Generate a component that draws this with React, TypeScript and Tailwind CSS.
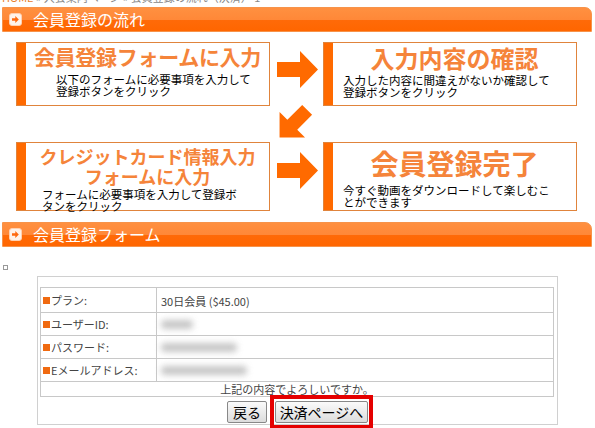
import React from "react";

const JP = "font-['Noto_Sans_CJK_JP','Noto_Sans',sans-serif]";

function BarIcon() {
  return (
    <svg width="13" height="13" viewBox="0 0 13 13" className="shrink-0">
      <rect x="0.5" y="0.5" width="12" height="12" rx="2.5" fill="#fff3ea" stroke="#ffd0b0" />
      <polygon points="3,5.2 6.3,5.2 6.3,3 9.8,6.5 6.3,10 6.3,7.8 3,7.8" fill="#ff6a10" />
    </svg>
  );
}

function SectionBar({ title }: { title: string }) {
  return (
    <div className="ml-[2px] w-[590px] h-[25px] rounded-tr-[7px] flex items-center gap-[11px] pl-[6px] border border-[#f7934a] bg-[linear-gradient(to_bottom,#ff9040_0%,#ff8838_50%,#ff6a08_52%,#ff6600_100%)]">
      <BarIcon />
      <span className={`${JP} text-white text-[16px] leading-none pb-[1px]`}>{title}</span>
    </div>
  );
}

function FlowBox({ children, sub, subPad }: { children: React.ReactNode; sub: React.ReactNode; subPad: string }) {
  return (
    <div className="flex border border-[#e0843c] bg-white h-full">
      <div className="w-[9px] bg-[#ff6a00] shrink-0" />
      <div className="flex-1 flex flex-col pt-[2px]">
        <div className={`${JP} text-[#f5843a] font-bold text-center leading-none`}>{children}</div>
        <div className={`${JP} text-black text-[11.5px] leading-[12px] ${subPad}`}>{sub}</div>
      </div>
    </div>
  );
}

function RightArrow() {
  return (
    <svg width="42" height="37" viewBox="0 0 42 37">
      <polygon points="0,11 23,11 23,0 41,18.5 23,37 23,26 0,26" fill="#ff6a00" />
    </svg>
  );
}

function DownLeftArrow() {
  return (
    <svg width="40" height="40" viewBox="0 0 40 40">
      <g transform="rotate(135 20 20)">
        <polygon points="0,13 21,13 21,2 39,20 21,38 21,27 0,27" fill="#ff6a00" />
      </g>
    </svg>
  );
}

function Row({ label, children }: { label: string; children: React.ReactNode }) {
  return (
    <tr className="h-[23px]">
      <td className="border border-[#c8c8c8] w-[116px] pl-[2px] align-middle">
        <div className="flex items-center gap-[1px]">
          <span className="inline-block w-[7px] h-[7px] bg-[#f06a10]" />
          <span className={`${JP} text-[11px] text-[#444]`}>{label}</span>
        </div>
      </td>
      <td className="border border-[#c8c8c8] pl-[4px] align-middle">{children}</td>
    </tr>
  );
}

function Blur({ w }: { w: number }) {
  return <div className="h-[9px] bg-[#b8b8b8] blur-[3px] rounded-sm opacity-80" style={{ width: w }} />;
}

export default function App() {
  return (
    <div className="w-[595px] h-[428px] bg-white overflow-hidden relative">
      <div className="h-[4px] overflow-hidden">
        <div className={`${JP} text-[11px] leading-[12px] -mt-[9px] pl-[2px] text-[#888] whitespace-nowrap`}>
          <span className="text-[#e8802e]">HOME</span> » 入会案内ページ » 会員登録の流れ（決済） 1
        </div>
      </div>
      <div className="mt-[3px]">
        <SectionBar title="会員登録の流れ" />
      </div>

      <div className="ml-[16px] mt-[10px] grid grid-cols-[254px_53px_254px] grid-rows-[64px_36px_69px]">
        <FlowBox
          sub={<>以下のフォームに必要事項を入力して<br />登録ボタンをクリック</>}
          subPad="pl-[30px] pt-[6px]"
        >
          <span className="text-[21px] tracking-[-0.3px] leading-[22px]">会員登録フォームに入力</span>
        </FlowBox>
        <div className="pl-[7px] pt-[9px]">
          <RightArrow />
        </div>
        <FlowBox
          sub={<>入力した内容に間違えがないか確認して<br />登録ボタンをクリック</>}
          subPad="pl-[10px] pt-[4px]"
        >
          <span className="text-[24px] leading-[25px]">入力内容の確認</span>
        </FlowBox>

        <div />
        <div className="pl-[3px] -mt-[2px]">
          <DownLeftArrow />
        </div>
        <div />

        <FlowBox
          sub={<>フォームに必要事項を入力して登録ボ<br />タンをクリック</>}
          subPad="pl-[16px] pt-[2px]"
        >
          <div className="text-[18px] leading-[20px] pt-[1px]">クレジットカード情報入力<br />フォームに入力</div>
        </FlowBox>
        <div className="pl-[7px] pt-[10px]">
          <RightArrow />
        </div>
        <FlowBox
          sub={<>今すぐ動画をダウンロードして楽しむこ<br />とができます</>}
          subPad="pl-[10px] pt-[3px]"
        >
          <span className="text-[28px] leading-[36px]">会員登録完了</span>
        </FlowBox>
      </div>

      <div className="mt-[11px]">
        <SectionBar title="会員登録フォーム" />
      </div>

      <div className="ml-[3px] mt-[18px] w-[5px] h-[5px] border border-[#999]" />

      <div className="ml-[37px] mt-[6px] w-[521px] h-[149px] border border-[#d0d0d0] pt-[10px] px-[2px]">
        <table className="w-[514px] border-collapse">
          <tbody>
            <Row label="プラン:">
              <span className={`${JP} text-[11px] text-[#444]`}>30日会員 ($45.00)</span>
            </Row>
            <Row label="ユーザーID:">
              <Blur w={32} />
            </Row>
            <Row label="パスワード:">
              <Blur w={76} />
            </Row>
            <Row label="Eメールアドレス:">
              <Blur w={86} />
            </Row>
            <tr className="h-[15px]">
              <td colSpan={2} className={`border border-[#c8c8c8] text-center ${JP} text-[11px] leading-[13px] text-[#444]`}>
                上記の内容でよろしいですか。
              </td>
            </tr>
          </tbody>
        </table>
        <div className="flex justify-center items-center gap-[3px] mt-[3px] ml-[5px]">
          <button className={`${JP} h-[22px] px-[5px] text-[14px] leading-none text-black border border-[#888] rounded-[2px] bg-[linear-gradient(to_bottom,#fafafa,#dcdcdc)]`}>
            戻る
          </button>
          <div className="border-[4px] border-[#e50000] p-[1px] -my-[5px]">
            <button className={`${JP} h-[22px] w-[93px] text-[14px] leading-none text-black border border-[#888] rounded-[2px] bg-[linear-gradient(to_bottom,#fafafa,#dcdcdc)]`}>
              決済ページへ
            </button>
          </div>
        </div>
      </div>
    </div>
  );
}
